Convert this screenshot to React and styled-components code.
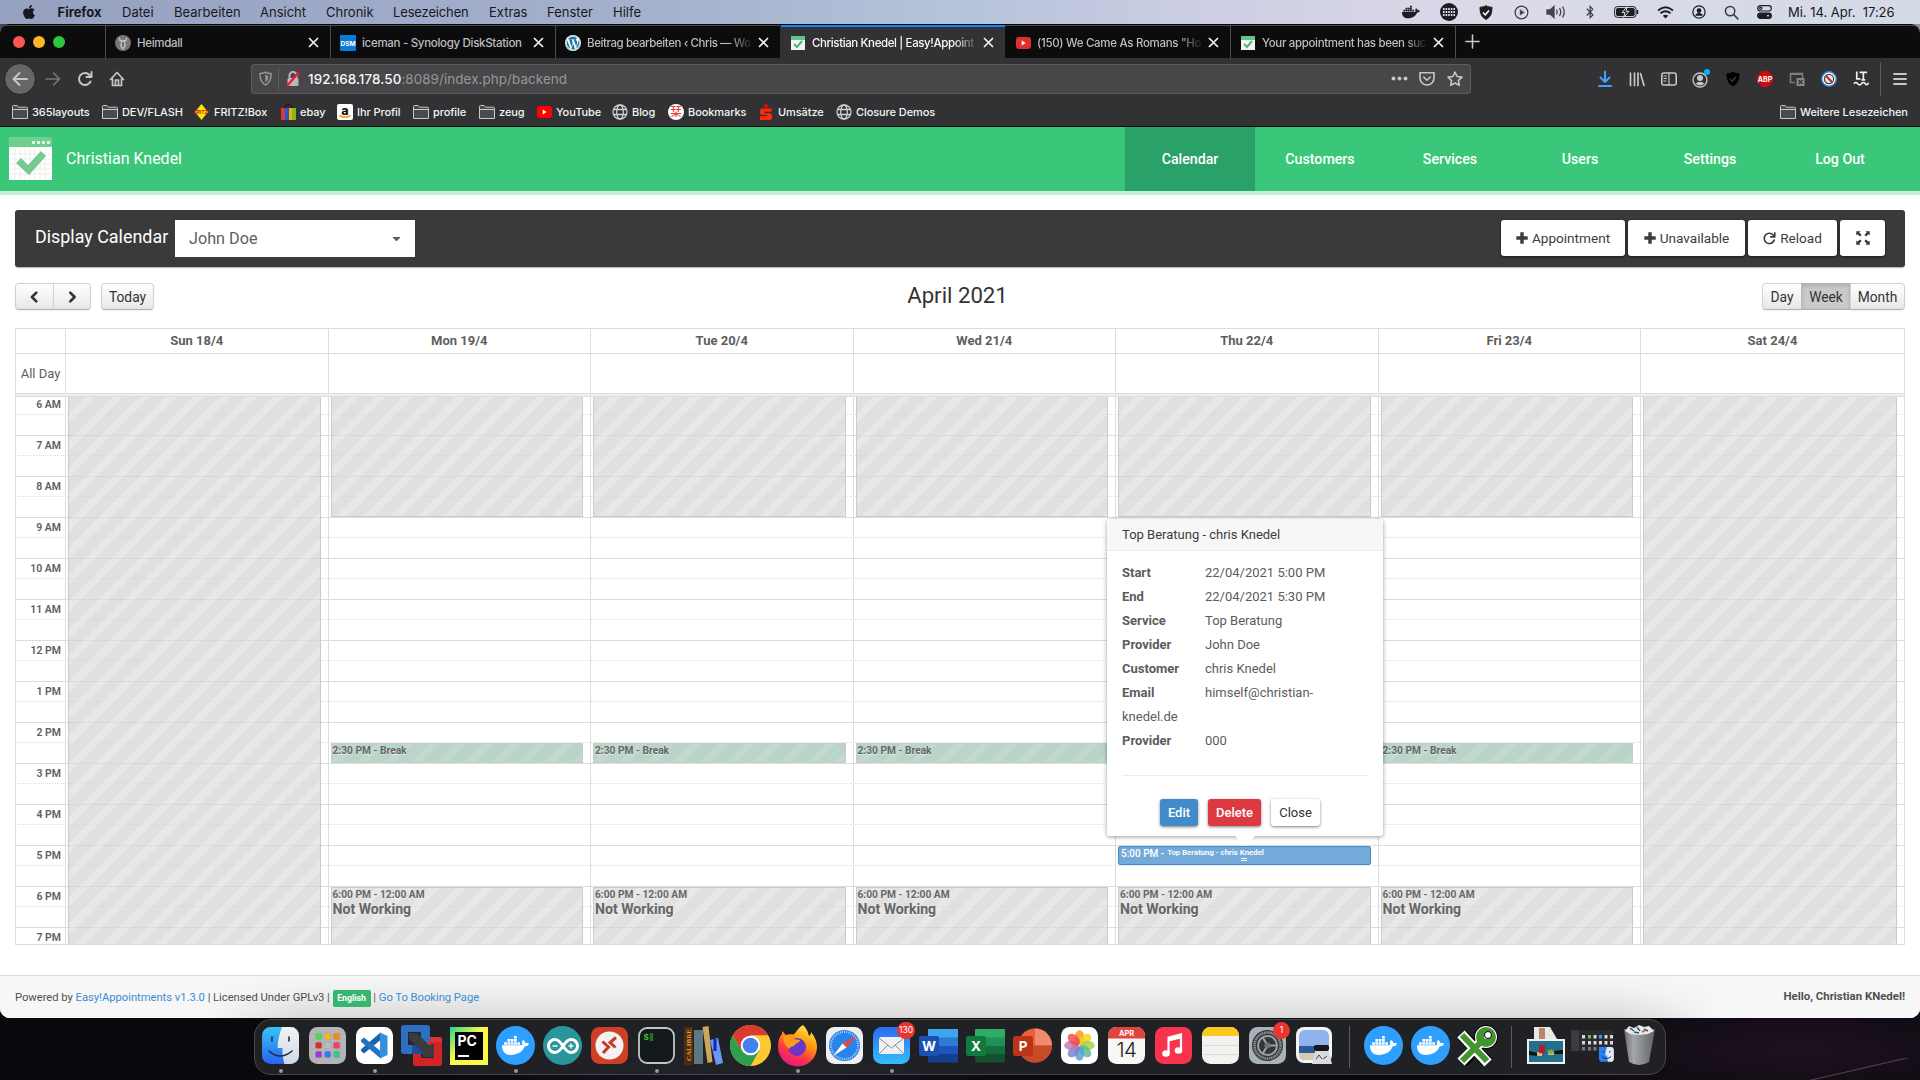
import React from "react";
import styled, { createGlobalStyle, css } from "styled-components";
import { FaApple, FaDocker, FaWordpress, FaBluetoothB, FaCaretDown } from "react-icons/fa";

const Global = createGlobalStyle`
  *, *::before, *::after { box-sizing: border-box; }
  body { margin: 0; background: #09080c; overflow: hidden; }
  svg { display: block; flex: none; overflow: visible; }
`;

const sys = `Inter, "Liberation Sans", sans-serif`;
const rob = `Roboto, "Liberation Sans", sans-serif`;

const Desktop = styled.div`
  width: 1920px;
  height: 1080px;
  display: flex;
  flex-direction: column;
  overflow: hidden;
  font-family: ${sys};
  background:
    linear-gradient(167deg, transparent 0 48%, #4b3544 49% 50.5%, transparent 52%) 1800px 1058px / 110px 24px no-repeat,
    radial-gradient(ellipse 330px 70px at 1800px 1050px, #1d111e, transparent),
    radial-gradient(ellipse 300px 50px at 750px 1085px, #191623, transparent),
    linear-gradient(90deg, #3a4a68 0 960px, #8d90a8) 0 0 / 100% 40px no-repeat,
    #09080c;
`;

/* ---------- system menu bar ---------- */
const MenuBar = styled.header`
  height: 24px;
  flex: none;
  display: flex;
  align-items: center;
  background: linear-gradient(90deg, #95a1bf 0%, #a4b0cc 33%, #b6c3da 50%, #cdcee4 63%, #dbdae8 78%, #d3dae6 100%);
  color: #17181d;
  font-size: 13px;
`;
const MenuItem = styled.span`
  width: ${(p) => p.$w}px;
  font-weight: ${(p) => (p.$bold ? 700 : 400)};
  letter-spacing: ${(p) => p.$ls || 0}px;
  white-space: nowrap;
`;
const AppleSlot = styled.span`
  width: 57.5px;
  padding-left: 21px;
`;
const Status = styled.div`
  margin-left: auto;
  display: flex;
  align-items: center;
`;
const StatusIcon = styled.span`
  width: ${(p) => p.$w}px;
  display: flex;
  justify-content: center;
  color: ${(p) => p.$c || "#1c1d22"};
`;
const Clock = styled.span`
  width: 140px;
  padding-left: 8px;
  white-space: pre;
  letter-spacing: -0.02px;
`;

/* ---------- browser window ---------- */
const Window = styled.div`
  height: 994px;
  flex: none;
  display: flex;
  flex-direction: column;
  background: #fff;
  border-top: 1px solid #08080a;
  border-radius: 9px 9px 10px 10px;
  overflow: hidden;
`;
const TabBar = styled.div`
  height: 33px;
  flex: none;
  display: flex;
  background: #0c0c0d;
  border-top: 1px solid #4a4a4c;
`;
const Lights = styled.div`
  width: 105px;
  display: flex;
  align-items: center;
  gap: 8px;
  padding-left: 13px;
`;
const Light = styled.i`
  width: 12px;
  height: 12px;
  border-radius: 50%;
  background: ${(p) => p.$c};
`;
const Tab = styled.div`
  width: 225px;
  display: flex;
  align-items: center;
  margin-top: -1px;
  padding: 2px 11px 0 9px;
  gap: 6px;
  border-left: 1px solid ${(p) => (p.$active || p.$noLine ? "transparent" : "#4d4d50")};
  background: ${(p) => (p.$active ? "#323234" : "transparent")};
  color: ${(p) => (p.$active ? "#f9f9fa" : "#bdbdc0")};
  box-shadow: ${(p) => (p.$active ? "inset 0 2px #0a84ff" : "none")};
  font-size: 11.5px;
  font-weight: ${(p) => (p.$active ? 500 : 450)};
`;
const TabIcon = styled.span`
  width: 16px;
  flex: none;
  display: flex;
  justify-content: center;
`;
const TabTitle = styled.span`
  flex: 1;
  min-width: 0;
  white-space: nowrap;
  letter-spacing: ${(p) => p.$ls || -0.3}px;
  ${(p) => p.$fade && css`mask-image: linear-gradient(90deg, #000 86%, transparent 101%);`}
`;
const NewTab = styled.div`
  border-left: 1px solid #4d4d50;
  padding: 8px 0 0 9px;
  color: #c6c6c9;
`;
const NavBar = styled.div`
  height: 41px;
  flex: none;
  display: flex;
  align-items: center;
  background: #323234;
  padding: 0 12px 0 4px;
  color: #c6c6c9;
`;
const BackButton = styled.span`
  width: 32px;
  height: 32px;
  border-radius: 50%;
  border: 1px solid #222224;
  background: #666668;
  display: flex;
  align-items: center;
  justify-content: center;
`;
const NavIcon = styled.span`
  width: ${(p) => p.$w || 32}px;
  display: flex;
  justify-content: center;
  color: ${(p) => p.$c || "inherit"};
`;
const UrlBar = styled.div`
  width: 1220px;
  height: 30px;
  margin-left: 118px;
  padding: 0 1px 0 5px;
  display: flex;
  align-items: center;
  background: #474749;
  border: 1px solid #5c5c5e;
  border-radius: 3px;
  font-size: 13.4px;
  color: #98989b;
`;
const UrlDivider = styled.i`
  width: 1px;
  height: 22px;
  margin: 0 7px 0 5px;
  background: #5f5f62;
`;
const Url = styled.span`
  flex: 1;
  margin-left: 8px;
  letter-spacing: 0.09px;
  b { font-weight: 500; color: #f9f9fa; }
`;
const NavTools = styled.div`
  margin-left: auto;
  display: flex;
  align-items: center;
`;
const MenuDivider = styled.i`
  width: 1px;
  height: 34px;
  margin: 0 11px 0 3px;
  background: #59595b;
`;
const BookmarkBar = styled.div`
  height: 28px;
  flex: none;
  display: flex;
  align-items: center;
  padding: 0 11px 2px 12px;
  background: #323234;
  border-bottom: 1px solid #0d0d0e;
  color: #f4f4f5;
  font-size: 11px;
  font-weight: 450;
`;
const Bookmark = styled.span`
  width: ${(p) => p.$w}px;
  display: flex;
  align-items: center;
  gap: 4px;
  white-space: nowrap;
  letter-spacing: -0.08px;
`;
const OtherBookmarks = styled(Bookmark)`
  margin-left: auto;
`;

/* ---------- application ---------- */
const AppHeader = styled.div`
  height: 68px;
  flex: none;
  display: flex;
  background: #3ac779;
  border-bottom: 4px solid #c3f0d6;
  padding-right: 15px;
  font-family: ${rob};
  color: #fff;
`;
const Brand = styled.div`
  display: flex;
  align-items: center;
  gap: 14px;
  padding-left: 9px;
  flex: 1;
  font-size: 16px;
  svg { margin-top: -2px; }
  span { margin-top: -1px; }
`;
const NavLink = styled.a`
  width: 130px;
  display: flex;
  align-items: center;
  justify-content: center;
  font-size: 14.2px;
  font-weight: 500;
  background: ${(p) => (p.$active ? "#29a168" : "transparent")};
`;
const Page = styled.main`
  flex: 1;
  display: flex;
  flex-direction: column;
  padding: 15px 15px 0;
  font-family: ${rob};
`;
const CalendarToolbar = styled.div`
  height: 57px;
  flex: none;
  display: flex;
  align-items: center;
  padding: 0 20px 1px;
  background: #3a3a3a;
  border-radius: 3px;
  box-shadow: 0 1px 1px rgba(0, 0, 0, 0.3);
`;
const ToolbarLabel = styled.label`
  width: 140px;
  color: #fff;
  font-size: 17.9px;
  margin-top: -4px;
`;
const Select = styled.div`
  width: 240px;
  height: 37px;
  display: flex;
  align-items: center;
  justify-content: space-between;
  padding: 0 12px 0 14px;
  background: #fff;
  color: #5e5e5e;
  font-size: 16.2px;
`;
const ToolbarActions = styled.div`
  margin-left: auto;
  display: flex;
  gap: 3px;
`;
const ActionButton = styled.button`
  width: ${(p) => p.$w}px;
  height: 36px;
  display: flex;
  align-items: center;
  justify-content: center;
  gap: 4px;
  border: 0;
  border-radius: 3px;
  padding: 0;
  background: #fff;
  color: #3c3c3c;
  font: 400 13.6px ${rob};
  box-shadow: 0 1px 3px rgba(0, 0, 0, 0.6);
`;
const CalendarHeader = styled.div`
  display: grid;
  grid-template-columns: 1fr auto 1fr;
  align-items: center;
  height: 61px;
  flex: none;
  padding-bottom: 2px;
`;
const ButtonSet = styled.div`
  display: flex;
  justify-self: ${(p) => (p.$right ? "end" : "start")};
`;
const FcButton = styled.button`
  width: ${(p) => p.$w}px;
  height: 27px;
  margin-left: ${(p) => p.$gap || -1}px;
  padding: 0;
  display: flex;
  align-items: center;
  justify-content: center;
  border: 1px solid ${(p) => (p.$active ? "#b9b9b9" : "#d2d2d2")};
  border-bottom-color: #b0b0b0;
  border-radius: ${(p) => p.$r || "0"};
  background: ${(p) => (p.$active ? "#cacaca" : "linear-gradient(#fff, #e7e7e7)")};
  box-shadow: ${(p) => (p.$active ? "inset 0 2px 4px rgba(0,0,0,.15)" : "inset 0 1px 0 rgba(255,255,255,.2), 0 1px 2px rgba(0,0,0,.06)")};
  color: #333;
  font: 400 13.8px ${rob};
`;
const MonthTitle = styled.h2`
  margin: 0;
  padding: 0 5px 4px 0;
  color: #333;
  font-size: 22.2px;
  font-weight: 400;
`;
const Grid = styled.section`
  height: 617px;
  flex: none;
  display: flex;
  flex-direction: column;
  border: 1px solid #ddd;
  color: #5e5e5e;
`;
const columns = css`
  display: grid;
  grid-template-columns: 49px repeat(6, 262.5px) 1fr;
`;
const HeadRow = styled.div`
  ${columns}
  height: ${(p) => p.$h}px;
  flex: none;
  border-bottom: 1px solid #ddd;
  font-size: 13px;
`;
const HeadCell = styled.div`
  display: flex;
  align-items: center;
  justify-content: center;
  padding: 0 0 ${(p) => (p.$plain ? 0 : 2)}px 0;
  font-weight: ${(p) => (p.$plain ? 400 : 700)};
  white-space: nowrap;
  & + & { border-left: 1px solid #ddd; }
`;
const Band = styled.div`
  height: 3px;
  flex: none;
  background: #eee;
  border-bottom: 1px solid #ddd;
`;
const TimeBody = styled.div`
  flex: 1;
  min-height: 0;
  display: grid;
  overflow: hidden;
`;
const Layer = styled.div`
  grid-area: 1 / 1;
  min-width: 0;
  height: 574px;
  margin-top: -3px;
`;
const Hour = styled.div`
  height: 41px;
  border-top: 1px solid #ddd;
`;
const HourLabel = styled.div`
  width: 49px;
  height: 19px;
  padding: 4px 4px 0 0;
  text-align: right;
  font-size: 10.5px;
  line-height: 12px;
  font-weight: 600;
`;
const HalfHour = styled.div`
  height: 21px;
  margin: 0 2px;
  border-top: 1px dotted #ddd;
`;
const DayLayer = styled(Layer)`
  ${columns}
  z-index: 1;
`;
const Day = styled.div`
  display: grid;
  grid-template-rows: 3px 17px 21px repeat(13, 20px 21px);
  border-left: 1px solid #ddd;
  padding: 0 7px 0 2px;
  min-width: 0;
`;
const stripes = {
  off: ["rgba(211,211,211,.7)", "rgba(222,222,222,.7)"],
  pause: ["rgba(154,195,175,.7)", "rgba(166,202,184,.7)"],
};
const Slot = styled.div`
  grid-row: ${(p) => p.$from} / ${(p) => p.$to};
  margin-top: ${(p) => (p.$from < 3 ? 0 : 1)}px;
  padding: 1px 2px 1px 1px;
  border: 1px solid #cbcbcb;
  border-top-width: ${(p) => (p.$from < 3 ? 0 : 1)}px;
  background: repeating-linear-gradient(135deg,
    ${(p) => stripes[p.$kind][0]} 0 11.5px,
    ${(p) => stripes[p.$kind][1]} 11.5px 19px);
  background-clip: padding-box;
  color: #666;
  font-size: 10.2px;
  line-height: 12px;
  font-weight: 700;
  white-space: nowrap;
  text-shadow: 0 1px 0 rgba(255, 255, 255, 0.5);
`;
const SlotTitle = styled.div`
  font-size: 14.1px;
  line-height: 17px;
`;
const Appointment = styled.div`
  grid-row: ${(p) => p.$from} / ${(p) => p.$to};
  margin-top: 1px;
  padding: 1px 1px 1px 2px;
  display: flex;
  gap: 3px;
  position: relative;
  background: #74aad9;
  border: 1px solid #428bca;
  border-radius: 2px;
  color: #fff;
  font-size: 10px;
  line-height: 12px;
  font-weight: 500;
  white-space: nowrap;
  small { font-size: 7.8px; line-height: 9px; font-weight: 600; }
`;
const ResizeGrip = styled.i`
  position: absolute;
  left: 50%;
  bottom: 3px;
  width: 6px;
  height: 3px;
  margin-left: -3px;
  border: solid #fff;
  border-width: 1px 0;
`;

/* ---------- popover ---------- */
const Popover = styled.div`
  position: absolute;
  left: 1107px;
  top: 519px;
  width: 276px;
  height: 317px;
  z-index: 5;
  background: #fff;
  border-radius: 3px;
  box-shadow: 0 1px 4px rgba(0, 0, 0, 0.4);
  font-family: ${rob};
  font-size: 13px;
  color: #5c5c5c;
  &::after {
    content: "";
    position: absolute;
    left: 128px;
    top: 317px;
    border: solid transparent;
    border-top-color: #fff;
    border-width: 10px 10px 0;
  }
`;
const PopoverTitle = styled.div`
  height: 32px;
  padding: 8px 15px 0;
  line-height: 16px;
  background: #f7f7f7;
  border-bottom: 1px solid #ebebeb;
  border-radius: 3px 3px 0 0;
  color: #3c3c3c;
`;
const PopoverRows = styled.div`
  padding: 10px 15px 0;
  line-height: 24px;
  div { height: 24px; }
  b { display: inline-block; width: 83px; }
`;
const PopoverFooter = styled.div`
  display: flex;
  justify-content: center;
  gap: 10px;
  margin: 22px 15px 0;
  padding: 23px 10px 0 0;
  border-top: 1px solid #ececec;
`;
const PopoverButton = styled.button`
  width: ${(p) => p.$w}px;
  height: 27px;
  padding: 0;
  border: 0;
  border-radius: 3px;
  background: ${(p) => p.$bg};
  color: ${(p) => p.$c || "#fff"};
  font: ${(p) => (p.$c ? 400 : 500)} 13px ${rob};
  box-shadow: 0 1px 3px rgba(0, 0, 0, 0.5);
`;

/* ---------- footer ---------- */
const Footer = styled.footer`
  height: 43px;
  flex: none;
  display: flex;
  align-items: center;
  justify-content: space-between;
  padding: 0 15px;
  border-top: 1px solid #ddd;
  background:
    linear-gradient(90deg, #f7f7f7 205px, transparent 300px 1620px, #f7f7f7 1720px),
    linear-gradient(#f7f7f7, #eeeeee 45%, #dadada);
  font-family: ${rob};
  font-size: 11.25px;
  color: #505050;
  white-space: nowrap;
  a { color: #3c8dd0; }
  & > span { letter-spacing: -0.04px; padding-top: 2px; }
  & > b { padding-bottom: 2px; font-size: 11.4px; }
`;
const Language = styled.span`
  display: inline-block;
  width: 38px;
  height: 17px;
  border-radius: 2px;
  background: #35b66f;
  color: #fff;
  font-size: 8.8px;
  font-weight: 700;
  line-height: 17px;
  text-align: center;
`;

/* ---------- dock ---------- */
const DockArea = styled.div`
  height: 62px;
  flex: none;
  display: flex;
  justify-content: center;
  padding-top: 1px;
`;
const Dock = styled.div`
  width: 1412px;
  height: 56px;
  display: flex;
  padding-left: 2px;
  background: rgba(34, 35, 39, 0.93);
  border: 1px solid #46464b;
  border-radius: 17px;
`;
const DockCell = styled.div`
  width: 47px;
  flex: none;
  display: flex;
  flex-direction: column;
  align-items: center;
  justify-content: center;
  position: relative;
  padding-bottom: 3px;
  &::after {
    content: "";
    display: ${(p) => (p.$running ? "block" : "none")};
    position: absolute;
    bottom: 1px;
    width: 4px;
    height: 4px;
    border-radius: 50%;
    background: #97979a;
  }
`;
const DockDivider = styled.div`
  width: ${(p) => p.$w}px;
  display: flex;
  justify-content: center;
  padding: 6px 0;
  &::before { content: ""; width: 1px; background: #5b5b5f; }
`;
const CountBadge = styled.span`
  position: absolute;
  right: ${(p) => p.$right}px;
  top: 2px;
  min-width: 17px;
  height: 17px;
  padding: 0 2px;
  border-radius: 9px;
  background: #e9352e;
  color: #fff;
  font-size: 8.5px;
  line-height: 17px;
  text-align: center;
`;

/* ---------- icons ---------- */
const Folder = () => (
  <svg width="16" height="14" viewBox="0 0 16 14" fill="#4a4a4c" stroke="#c9c9cb" strokeWidth="1">
    <path d="M.5 13.5V1.5Q.5.5 1.5.5H5L6.500 2.200H14.500Q15.500 2.200 15.500 3.200V13.500ZM.5 4.500H15.500" />
  </svg>
);
const Globe = () => (
  <svg width="16" height="16" viewBox="0 0 16 16" fill="none" stroke="#cfcfd1" strokeWidth="1.300">
    <circle cx="8" cy="8" r="7" /><ellipse cx="8" cy="8" rx="3.300" ry="7" /><path d="M1.500 5.500h13M1.500 10.500h13" />
  </svg>
);
const Cross = () => (
  <svg width="11" height="11" viewBox="0 0 11 11" stroke="#f2f2f3" strokeWidth="1.700"><path d="M1 1l9 9M10 1l-9 9" /></svg>
);
const Plus = () => (
  <svg width="12" height="12" viewBox="0 0 12 12" fill="#3c3c3c"><path d="M4.300.3h3.400v4h4v3.400h-4v4H4.300v-4h-4V4.300h4z" /></svg>
);
const AppLogo = ({ w = 43, h = 43 }) => (
  <svg width={w} height={h} viewBox="0 0 43 43">
    <rect width="43" height="43" fill="#fff" />
    <path d="M6 12v30M11 12v30M16 12v30M21 12v30M26 12v30M31 12v30M36 12v30M1 17h41M1 22h41M1 27h41M1 32h41M1 37h41" stroke="#ececec" />
    <rect width="43" height="10" fill="#6fd08d" />
    <path d="M23 5.500h3M28 5.500h3M33 5.500h3M38 5.500h3" stroke="#dff7e6" strokeWidth="3" />
    <path d="M7 26l5-5 7 7L32 14l5 5-17 19z" fill="#74ca8f" />
  </svg>
);
const TabLogo = () => (
  <svg width="14" height="14" viewBox="0 0 14 14">
    <rect width="14" height="14" fill="#f3f3f3" /><rect width="14" height="4" fill="#5fc785" />
    <path d="M3 8l3 3 5-6" stroke="#4cb873" strokeWidth="2" fill="none" />
  </svg>
);
const Youtube = ({ c = "#f00" }) => (
  <svg width="15" height="12" viewBox="0 0 15 12"><rect width="15" height="12" rx="3" fill={c} /><path d="M5.700 3.600v4.800l4-2.400z" fill="#fff" /></svg>
);
const Stroke = ({ d, s = 16, w = 1.8, children, vb = 16 }) => (
  <svg width={s} height={s} viewBox={`0 0 ${vb} ${vb}`} fill="none" stroke="currentColor" strokeWidth={w} strokeLinecap="round" strokeLinejoin="round">
    {d && <path d={d} />}{children}
  </svg>
);

const Squircle = ({ fill, children, s = 37 }) => (
  <svg width={s} height={s} viewBox="0 0 37 37"><rect width="37" height="37" rx="8.500" fill={fill} />{children}</svg>
);
const Finder = ({ s = 37 }) => (
  <svg width={s} height={s} viewBox="0 0 37 37">
    <defs>
      <linearGradient id="fa" x2="0" y2="1"><stop stopColor="#35c4f8" /><stop offset="1" stopColor="#2b62f0" /></linearGradient>
      <linearGradient id="fb" x2="0" y2="1"><stop stopColor="#f2f3f6" /><stop offset="1" stopColor="#cfd8e6" /></linearGradient>
      <clipPath id="fc"><rect width="37" height="37" rx="8.500" /></clipPath>
    </defs>
    <g clipPath="url(#fc)">
      <rect width="37" height="37" fill="url(#fa)" />
      <path d="M20 0Q16 10 15.500 21H20.500Q20 30 22.500 37H37V0Z" fill="url(#fb)" />
      <path d="M10 10v4M27 10v4M7 24Q18 34 30 24" stroke="#1d2b45" strokeWidth="1.600" fill="none" strokeLinecap="round" />
    </g>
  </svg>
);
const Launchpad = () => {
  const c = ["#4cdc46", "#fdb81e", "#f68a12", "#e02a2a", "#b9bcc0", "#fb3d5c", "#a436d8", "#2f7bf6", "#3ec58b"];
  return <Squircle fill="#b3b4b7">{c.map((f, i) => <rect key={i} x={6.500 + (i % 3) * 9} y={6.300 + Math.floor(i / 3) * 9} width="6.300" height="6.300" rx="1.500" fill={f} stroke="#8a8b8e" strokeWidth=".3" />)}</Squircle>;
};
const VsCode = () => (
  <Squircle fill="#fff">
    <path d="M24.500 5.500V13L8 26.500 5 24V22.300z" fill="#1b62ae" />
    <path d="M24.500 31.500V24L8 10.500 5 13v1.700z" fill="#2273c4" />
    <path d="M24 5.500L31.500 9v19L24 31.500z" fill="#3590dc" />
  </Squircle>
);
const VmWare = () => (
  <svg width="41" height="41" viewBox="0 0 41 41">
    <rect x="12" y="12" width="29" height="29" rx="3" fill="#d22427" /><rect x="20" y="20" width="13" height="13" fill="#26262a" />
    <rect width="29" height="29" rx="3" fill="#2d6fc0" /><path d="M11 20h18v9H11z" fill="#1f4d96" /><rect x="7" y="7" width="13" height="13" fill="#26262a" />
    <path d="M20 20h9v-8h9q3 0 3 3v2H20z" fill="#d83436" />
    <path d="M8 8h8l12 12 5-1v13H20l3-4L8 14z" fill="#3a3a3f" />
  </svg>
);
const PyCharm = () => (
  <svg width="38" height="38" viewBox="0 0 38 38">
    <defs><linearGradient id="pc" x2="1" y2="1"><stop stopColor="#21d789" /><stop offset=".45" stopColor="#fcf84a" /><stop offset="1" stopColor="#fcf84a" /></linearGradient></defs>
    <rect width="38" height="38" fill="url(#pc)" /><rect x="5" y="5" width="28" height="28" fill="#000" />
    <text x="7.500" y="18.500" fontFamily="Inter, sans-serif" fontWeight="700" fontSize="14" fill="#fff">PC</text><path d="M8 29h11" stroke="#fff" strokeWidth="2" />
  </svg>
);
const RoundIcon = styled.span`
  width: 39px;
  height: 39px;
  border-radius: 50%;
  display: flex;
  align-items: center;
  justify-content: center;
  background: ${(p) => p.$bg};
  color: #fff;
`;
const Docker = () => <RoundIcon $bg="#2f9fff"><FaDocker size={27} /></RoundIcon>;
const Arduino = () => (
  <RoundIcon $bg="#2a959b">
    <svg width="32" height="20" viewBox="0 0 32 20" fill="none" stroke="#fff" strokeWidth="3">
      <path d="M16 10C13 5.500 11 3.500 8 3.500a6.500 6.500 0 0 0 0 13c3 0 5-2 8-6.500s5-6.500 8-6.500a6.500 6.500 0 0 1 0 13c-3 0-5-2-8-6.500z" />
      <path d="M5.500 10h5M21.500 10h5M24 7.500v5" strokeWidth="1.500" />
    </svg>
  </RoundIcon>
);
const Remote = () => (
  <Squircle fill="#cf3f24"><circle cx="18.500" cy="18.500" r="14" fill="#f3f1f1" />
    <path d="M11.500 14.500l6 5.500-5.500 6M25 10.500l-6 5 5.500 5" stroke="#c73a20" strokeWidth="3" fill="none" /></Squircle>
);
const Terminal = () => (
  <svg width="37" height="37" viewBox="0 0 37 37"><rect x="1" y="1" width="35" height="35" rx="8" fill="#141a1c" stroke="#bfc6ca" strokeWidth="1.800" />
    <text x="5.500" y="13" fontFamily="Liberation Mono, monospace" fontWeight="700" fontSize="9" fill="#35c13b">$</text><path d="M13.500 6v8" stroke="#216f25" strokeWidth="3.500" /></svg>
);
const Calibre = () => (
  <svg width="41" height="39" viewBox="0 0 41 39">
    <rect x="1" y="1" width="9" height="38" fill="#4e2a12" /><rect x="11" y="4" width="9" height="34" fill="#5c7882" />
    <path d="M19.500 1l6-1 4 36-5 1z" fill="#c9a75c" /><path d="M27 14l8-2 5 25-7 2z" fill="#6a98f5" /><path d="M32 13v12" stroke="#1b22b0" strokeWidth="3" />
    <text transform="translate(8.200 35) rotate(-90)" fontSize="7" fontFamily="Liberation Serif, serif" fontWeight="700" fill="#e0a23a">CALIBRE</text>
  </svg>
);
const Chrome = () => (
  <svg width="41" height="41" viewBox="0 0 41 41">
    <circle cx="20.500" cy="20.500" r="20.500" fill="#fcc934" />
    <path d="M2.750 10.250A20.500 20.500 0 0 1 38.250 10.250H20.500L11.600 25.500Z" fill="#d93b30" />
    <path d="M2.750 10.250A20.500 20.500 0 0 0 20.500 41L29.400 25.600 11.600 25.600Z" fill="#2f9e4f" />
    <circle cx="20.500" cy="20.500" r="9.800" fill="#fff" /><circle cx="20.500" cy="20.500" r="7.800" fill="#4480ee" />
  </svg>
);
const Firefox = () => (
  <svg width="41" height="41" viewBox="0 0 41 41">
    <defs><linearGradient id="ff" x1=".8" y1="0" x2=".3" y2="1"><stop stopColor="#fff244" /><stop offset=".4" stopColor="#ff980e" /><stop offset=".7" stopColor="#ff3647" /><stop offset="1" stopColor="#e31587" /></linearGradient></defs>
    <path d="M26 0c5 5 5 8 6 11 2-1 2-3 2-4 4 5 6 10 6 15A19.500 19.500 0 0 1 1 22C1 15 3 11 5 9V6l4 4c2-1 4-1 6-.500C19 10 20 3 26 0Z" fill="url(#ff)" />
    <circle cx="20" cy="22" r="9" fill="#6a35c8" /><path d="M6 11c5-1 8 1 10 3l7 1c0 3-5 3-6 6-2 0-4 1-5 3-4-4-6-8-6-13z" fill="#ff9a1a" />
  </svg>
);
const Safari = () => (
  <Squircle fill="#eeeff1"><circle cx="18.500" cy="18.500" r="15.500" fill="#2a83ea" /><circle cx="18.500" cy="18.500" r="13.500" fill="none" stroke="#cfe4fb" strokeWidth="2" strokeDasharray=".8 1.300" />
    <path d="M31 8L20.500 20.500 16.500 16.500Z" fill="#f04438" /><path d="M7 29l9.500-12.500 4 4z" fill="#fff" /></Squircle>
);
const Mail = () => (
  <svg width="37" height="37" viewBox="0 0 37 37"><defs><linearGradient id="ml" x2="0" y2="1"><stop stopColor="#2b6cf2" /><stop offset="1" stopColor="#35bdf9" /></linearGradient></defs>
    <rect width="37" height="37" rx="8.500" fill="url(#ml)" /><rect x="6" y="10" width="25" height="17" rx="1.500" fill="#eef0f2" /><path d="M6 11l12.500 10L31 11M6 27l9-9M31 27l-9-9" fill="none" stroke="#8c9198" /></svg>
);
const Office = ({ letter, main, a, b, c, d, round }) => (
  <svg width="39" height="35" viewBox="0 0 39 35">
    {round ? (
      <g><circle cx="22" cy="17.500" r="17" fill={b} /><path d="M22 .5A17 17 0 0 1 39 17.500H22z" fill={a} /><path d="M5 17.500H39A17 17 0 0 1 22 34.500 17 17 0 0 1 5 17.500" fill={c} /></g>
    ) : (
      <g><rect x="9" y="1" width="30" height="9" fill={a} /><rect x="9" y="9.500" width="30" height="9" fill={b} /><rect x="9" y="18" width="30" height="8.500" fill={c} /><rect x="9" y="26" width="30" height="8.500" fill={d} /></g>
    )}
    <rect x="0" y="8" width="20" height="20" rx="2" fill={main} />
    <text x="10" y="23" textAnchor="middle" fontFamily="Inter, sans-serif" fontWeight="700" fontSize="13.500" fill="#fff">{letter}</text>
  </svg>
);
const Photos = () => {
  const c = ["#f7941d", "#f5d90f", "#a5cf4a", "#5cbb8a", "#4f9fd9", "#7c7fc9", "#c076b5", "#ea4a45"];
  return <Squircle fill="#fff">{c.map((f, i) => <ellipse key={i} cx="18.500" cy="10.500" rx="4.700" ry="7.300" fill={f} opacity=".82" transform={`rotate(${i * 45} 18.500 18.500)`} />)}</Squircle>;
};
const CalendarIcon = () => (
  <Squircle fill="#f7f7f5"><path d="M0 11V8.500A8.500 8.500 0 0 1 8.500 0H28.500A8.500 8.500 0 0 1 37 8.500V11.500H0z" fill="#e0443c" />
    <text x="18.500" y="8.700" textAnchor="middle" fontSize="7.300" fontWeight="700" fontFamily="Inter, sans-serif" fill="#fff">APR</text>
    <text x="18.500" y="30" textAnchor="middle" fontSize="20.500" fontWeight="300" letterSpacing="-.5" fontFamily="Inter, sans-serif" fill="#222">14</text></Squircle>
);
const Music = () => (
  <Squircle fill="#f8334d"><path d="M13.500 26V10.500L26 7.500V23" fill="none" stroke="#fff" strokeWidth="2.200" /><path d="M13.500 10.500L26 7.500v4L13.500 14.500z" fill="#fff" /><ellipse cx="11" cy="26.500" rx="3.800" ry="3.200" fill="#fff" /><ellipse cx="23.500" cy="23.500" rx="3.800" ry="3.200" fill="#fff" /></Squircle>
);
const Notes = () => (
  <Squircle fill="#f3f2f0"><path d="M0 9V8.500A8.500 8.500 0 0 1 8.500 0H28.500A8.500 8.500 0 0 1 37 8.500V9z" fill="#fbc81f" /><path d="M1 18.500h35M1 27.500h35" stroke="#dcdad6" /></Squircle>
);
const Settings = () => (
  <Squircle fill="#a9b2b8"><circle cx="18.500" cy="18.500" r="15.500" fill="#33373b" /><circle cx="18.500" cy="18.500" r="13" fill="none" stroke="#8f9498" strokeWidth="2.500" strokeDasharray="1.500 .7" />
    <circle cx="18.500" cy="18.500" r="9.500" fill="none" stroke="#9da1a5" strokeWidth="2" /><path d="M18.500 18.500H28M18.500 18.500L13.500 10M18.500 18.500L13.500 27" stroke="#9da1a5" strokeWidth="2" /><circle cx="18.500" cy="18.500" r="3" fill="#6d7277" /></Squircle>
);
const PreviewIcon = () => (
  <svg width="38" height="38" viewBox="0 0 38 38"><rect width="36" height="36" rx="8" fill="#f4f4f4" /><rect x="3" y="3" width="30" height="30" rx="6" fill="#8fb3ef" /><path d="M3 19h30v8H3z" fill="#285d95" /><path d="M3 26h30v2a5 5 0 0 1-5 5H8a5 5 0 0 1-5-5z" fill="#d8c9b4" />
    <path d="M19 20h14v5l3 12H16l3-12z" fill="#d9dbde" /><rect x="18" y="18" width="15" height="6" rx="2" fill="#17181a" /><path d="M20 32l3-4 3 4M27 32l4-3" stroke="#444" fill="none" /></svg>
);
const KeePass = () => (
  <svg width="41" height="41" viewBox="0 0 41 41">
    <g fill="none" stroke="#000" strokeWidth="14"><path d="M5 10l25 27M6 37L27 14" strokeWidth="12" /><circle cx="29" cy="12" r="5" /></g>
    <g fill="none" stroke="#fff" strokeWidth="10"><path d="M4 9l27 29M4 37L27 14" /><circle cx="29" cy="12" r="6" /></g>
    <g fill="none" stroke="#43962f" strokeWidth="6"><path d="M5 10l25 26M5 36L27 14" /><circle cx="29" cy="12" r="6" strokeWidth="8" /></g>
    <circle cx="31" cy="10" r="3.500" fill="#fff" stroke="#000" />
  </svg>
);
const PictureStack = () => (
  <svg width="38" height="37" viewBox="0 0 38 37"><path d="M7 0h16l7 12H7z" fill="#e9e9e9" /><path d="M12 1h6v11h-6z" fill="#b98667" /><rect y="12" width="38" height="25" fill="#eef2f3" /><rect x="2" y="14" width="34" height="21" fill="#23708d" />
    <path d="M2 24l9 2v3l-9-1zM36 23l-9 1v3l9 0z" fill="#111" /><path d="M10 25h5v4h-5zM21 25h6v3h-6z" fill="#e5b08b" /><rect x="12" y="18" width="6" height="8" fill="#b41f27" /><path d="M20 24l5-2 3 4-6 1z" fill="#6bb742" /></svg>
);
const MiniWindow = () => (
  <svg width="43" height="34" viewBox="0 0 43 34">
    <rect width="42" height="21" y="1" fill="#2b2b2d" /><rect width="8" height="21" y="1" fill="#3c3b3d" />
    {[6, 12, 18].map((y) => [11, 17, 22.500, 28, 33.500, 39].map((x, i) => <rect key={x + "-" + y} x={x} y={y} width="3" height="3.500" fill={y === 6 && i === 3 ? "#2f9fff" : y === 6 && i === 1 ? "#6fbf60" : y === 18 ? "#77797d" : "#d6d8da"} />))}
    <g transform="translate(28 18) scale(.4)"><rect width="37" height="37" rx="8.500" fill="#2b80f5" /><path d="M20 0Q16 10 15.500 21H20.500Q20 30 22.500 37H28.500A8.500 8.500 0 0 0 37 28.500V8.500A8.500 8.500 0 0 0 28.500 0Z" fill="#e6ebf2" /><path d="M10 10v4M27 10v4M7 24Q18 34 30 24" stroke="#1d2b45" strokeWidth="2.500" fill="none" /></g>
  </svg>
);
const Trash = () => (
  <svg width="33" height="41" viewBox="0 0 33 41"><defs><linearGradient id="tr"><stop stopColor="#6a6e71" /><stop offset=".3" stopColor="#a3a7a9" /><stop offset="1" stopColor="#606467" /></linearGradient></defs>
    <path d="M1 4l5 33q10 6 20 0L32 4z" fill="url(#tr)" /><path d="M2 6L6 1l5 2 5-3 5 2 5-1 5 5-6 3-9 1-9-1z" fill="#e8e9ea" /><path d="M7 3l4 3M14 2l3 4M21 4l4 2M11 7l5 1" stroke="#2d5b6a" strokeWidth="1.500" /><path d="M19 7l4-2" stroke="#d2553a" strokeWidth="1.500" /></svg>
);

const shieldPath = "M8 1.200c2 1.200 4 1.500 6 1.500 0 6-1.500 10-6 12.200-4.500-2.200-6-6.200-6-12.200 2 0 4-.3 6-1.500z";

const tabs = [
  { t: "Heimdall", icon: <svg width="16" height="16" viewBox="0 0 16 16"><circle cx="8" cy="8" r="8" fill="#77777a" /><path d="M4 2q-1 4 2 5l-1 4 3 4 3-4-1-4q3-1 2-5l-2 3H6z" fill="#bdbdc0" /><path d="M7 7h2v5H7z" fill="#6d6d70" /></svg> },
  { t: "iceman - Synology DiskStation", icon: <svg width="16" height="16" viewBox="0 0 16 16"><rect width="16" height="16" rx="1" fill="#0a7bd8" /><text x="8" y="10.500" textAnchor="middle" fontSize="6.500" fontWeight="700" fontFamily="Inter, sans-serif" fill="#fff">DSM</text></svg> },
  { t: "Beitrag bearbeiten ‹ Chris — Wo", ls: -0.42, fade: true, icon: <svg width="16" height="16" viewBox="0 0 16 16"><circle cx="8" cy="8" r="8" fill="#fff" /><g transform="translate(.5 .5)"><FaWordpress size={15} color="#21759b" /></g></svg> },
  { t: "Christian Knedel | Easy!Appoint", ls: -0.38, fade: true, active: true, icon: <TabLogo /> },
  { t: "(150) We Came As Romans \"Ho", fade: true, noLine: true, icon: <Youtube c="#e02f2f" /> },
  { t: "Your appointment has been suc", ls: -0.33, fade: true, icon: <TabLogo /> },
];
const menus = [["Datei", 52], ["Bearbeiten", 86], ["Ansicht", 66], ["Chronik", 67], ["Lesezeichen", 96, -0.15], ["Extras", 58], ["Fenster", 66], ["Hilfe", 40]];
const bookmarks = [
  ["365layouts", 90, <Folder />], ["DEV/FLASH", 91, <Folder />],
  ["FRITZ!Box", 88, <svg width="17" height="16" viewBox="0 0 17 16"><path d="M8.500 0L15 8l-6.500 8L2 8z" fill="#ffe500" /><text x="8.500" y="10" fontSize="5" fontStyle="italic" fontWeight="700" textAnchor="middle" fontFamily="Inter, sans-serif" fill="#d3122a">FRITZ!</text></svg>],
  ["ebay", 56, <svg width="15" height="16" viewBox="0 0 15 16"><path d="M4 5V2.500Q7.500-1.500 11 2.500V5" fill="none" stroke="#111" /><path d="M0 4h4v12H0z" fill="#e53238" /><path d="M4 4h4v12H4z" fill="#1c5bd6" /><path d="M8 4h3v12H8z" fill="#f5af02" /><path d="M11 4h4v12h-4z" fill="#86b817" /></svg>],
  ["Ihr Profil", 76, <svg width="16" height="16" viewBox="0 0 16 16"><rect width="16" height="16" rx="2" fill="#fff" /><text x="8" y="10.800" fontSize="12.500" fontWeight="800" textAnchor="middle" fontFamily="Inter, sans-serif" fill="#111">a</text><path d="M2.500 11.500q5.500 3.500 11 0" stroke="#ff9900" strokeWidth="1.500" fill="none" /></svg>],
  ["profile", 66, <Folder />], ["zeug", 58, <Folder />], ["YouTube", 75, <Youtube />], ["Blog", 56, <Globe />],
  ["Bookmarks", 90, <svg width="16" height="16" viewBox="0 0 16 16"><circle cx="8" cy="8" r="8" fill="#fff" /><text x="8" y="12" fontSize="11" textAnchor="middle" fontFamily="Noto Sans CJK JP, sans-serif" fill="#e8372c">栞</text></svg>],
  ["Umsätze", 78, <svg width="16" height="16" viewBox="0 0 16 16"><circle cx="8" cy="2" r="1.900" fill="#f00" /><path d="M13.500 4.500H4.500Q2 4.500 2 7v1.500Q2 11 4.500 11H9v1.200H2V16H11.500Q14 16 14 13.500V12Q14 9.300 11.500 9.300H6.500V7.800h7z" fill="#ff2a0c" /></svg>],
  ["Closure Demos", 110, <Globe />],
];
const navItems = ["Calendar", "Customers", "Services", "Users", "Settings", "Log Out"];
const days = ["Sun 18/4", "Mon 19/4", "Tue 20/4", "Wed 21/4", "Thu 22/4", "Fri 23/4", "Sat 24/4"];
const hours = ["6 AM", "7 AM", "8 AM", "9 AM", "10 AM", "11 AM", "12 PM", "1 PM", "2 PM", "3 PM", "4 PM", "5 PM", "6 PM", "7 PM"];
const details = [["Start", "22/04/2021 5:00 PM"], ["End", "22/04/2021 5:30 PM"], ["Service", "Top Beratung"], ["Provider", "John Doe"], ["Customer", "chris Knedel"], ["Email", "himself@christian-"], [null, "knedel.de"], ["Provider", "000"]];

function DaySlots({ index }) {
  if (index === 0 || index === 6) return <Day><Slot $kind="off" $from={2} $to={30} /></Day>;
  return (
    <Day>
      <Slot $kind="off" $from={2} $to={8} />
      {index === 4
        ? <Appointment $from={24} $to={25}><span>5:00 PM - </span><small>Top Beratung - chris Knedel</small><ResizeGrip /></Appointment>
        : <Slot $kind="pause" $from={19} $to={20}>2:30 PM - Break</Slot>}
      <Slot $kind="off" $from={26} $to={30}>6:00 PM - 12:00 AM<SlotTitle>Not Working</SlotTitle></Slot>
    </Day>
  );
}

export default function App() {
  return (
    <Desktop>
      <Global />
      <MenuBar>
        <AppleSlot><FaApple size={16} /></AppleSlot>
        <MenuItem $w={64.5} $bold>Firefox</MenuItem>
        {menus.map(([m, w, ls]) => <MenuItem key={m} $w={w} $ls={ls}>{m}</MenuItem>)}
        <Status>
          <StatusIcon $w={38}><FaDocker size={18} /></StatusIcon>
          <StatusIcon $w={38}><svg width="18" height="18" viewBox="0 0 18 18"><circle cx="9" cy="9" r="9" fill="#1c1d22" /><path d="M3 6h12M3 9h12M3 12h12" stroke="#dcdce6" strokeWidth="1.800" strokeDasharray="1.600 1" /></svg></StatusIcon>
          <StatusIcon $w={36}><svg width="16" height="17" viewBox="0 0 16 16"><path d={shieldPath} fill="#1c1d22" stroke="#1c1d22" /><path d="M5 8l2.300 2.300L11 6" fill="none" stroke="#fff" strokeWidth="1.500" /></svg></StatusIcon>
          <StatusIcon $w={34} $c="#3a3b42"><Stroke s={15} w={1.3}><circle cx="8" cy="8" r="6.800" /><path d="M6.500 5.200v5.600l4.300-2.800z" fill="currentColor" strokeWidth=".5" /></Stroke></StatusIcon>
          <StatusIcon $w={35} $c="#44454c"><svg width="20" height="14" viewBox="0 0 20 14" fill="none" stroke="currentColor" strokeWidth="1.300"><path d="M1 5h3l4-3.500v11L4 9H1z" fill="currentColor" /><path d="M10.500 4.500q1.500 2.500 0 5M13.500 3q2.500 4 0 8M16.500 1.500q3.500 5.500 0 11" /></svg></StatusIcon>
          <StatusIcon $w={33} $c="#3a3b42"><FaBluetoothB size={14} /></StatusIcon>
          <StatusIcon $w={40}><svg width="25" height="12" viewBox="0 0 25 12"><rect x=".6" y=".6" width="21.500" height="10.800" rx="3" fill="none" stroke="#1c1d22" /><rect x="2" y="2" width="18.700" height="8" rx="1.800" fill="#1c1d22" /><path d="M23.500 4v4" stroke="#1c1d22" strokeWidth="1.500" /><path d="M13 .5L8 6.600h3L9.700 11.500 15 5.300h-3z" fill="#1c1d22" stroke="#dcdce6" /></svg></StatusIcon>
          <StatusIcon $w={38}><svg width="17" height="13" viewBox="0 0 17 13" fill="none" stroke="#1c1d22" strokeWidth="1.800"><path d="M1 4.500q7.500-6.500 15 0M3.500 7.300q5-4 10 0" /><path d="M5.800 9.700q2.700-2 5.400 0L8.500 12.500z" fill="#1c1d22" stroke="none" /></svg></StatusIcon>
          <StatusIcon $w={30}><Stroke s={14} w={1.4}><circle cx="8" cy="8" r="7" /><circle cx="8" cy="6.300" r="2" fill="currentColor" /><path d="M4.500 11.500q3.500-3 7 0z" fill="currentColor" /></Stroke></StatusIcon>
          <StatusIcon $w={35} $c="#3a3b42"><Stroke s={15} w={1.6}><circle cx="6.500" cy="6.500" r="5" /><path d="M10.500 10.500l4.300 4.300" /></Stroke></StatusIcon>
          <StatusIcon $w={31}><svg width="15" height="14" viewBox="0 0 15 14" fill="none" stroke="#1c1d22" strokeWidth="1.200"><rect x=".7" y=".7" width="13.600" height="5.300" rx="2.600" /><circle cx="3.800" cy="3.300" r="1.200" /><rect x=".7" y="8" width="13.600" height="5.300" rx="2.600" fill="#1c1d22" /><circle cx="11" cy="10.700" r="1.500" fill="#dcdce6" /></svg></StatusIcon>
          <Clock>Mi. 14. Apr.  17:26</Clock>
        </Status>
      </MenuBar>

      <Window>
        <TabBar>
          <Lights><Light $c="#fe5650" /><Light $c="#fdb42a" /><Light $c="#30c43f" /></Lights>
          {tabs.map((t) => (
            <Tab key={t.t} $active={t.active} $noLine={t.noLine}>
              <TabIcon>{t.icon}</TabIcon>
              <TabTitle $fade={t.fade} $ls={t.ls}>{t.t}</TabTitle>
              <Cross />
            </Tab>
          ))}
          <NewTab><Stroke s={15} w={1.7} d="M8 1v14M1 8h14" /></NewTab>
        </TabBar>
        <NavBar>
          <BackButton><Stroke w={2} d="M15 8H1.500M7.500 2L1.500 8l6 6" /></BackButton>
          <NavIcon $c="#77777a" $w={33}><Stroke w={1.6} d="M1 8h13.500M8.500 2l6 6-6 6" /></NavIcon>
          <NavIcon $w={32}><Stroke w={2} d="M13.500 10.500A6 6 0 1 1 12.500 4M14.500 1v5h-5" /></NavIcon>
          <NavIcon $w={32}><Stroke w={1.7} d="M1.500 8.500L8 1.500l6.500 7M3.500 8v6.500h9V8M6.500 14V9h3v5" /></NavIcon>
          <UrlBar>
            <NavIcon $w={16}><Stroke s={15} w={1.5}><path d={shieldPath} /><path d="M8 4v8q2.500-2 3-6z" fill="currentColor" strokeWidth=".5" /></Stroke></NavIcon>
            <UrlDivider />
            <NavIcon $w={14}><svg width="14" height="16" viewBox="0 0 14 16"><path d="M3.500 7V4.500a3.500 3.500 0 0 1 7 0V7" fill="none" stroke="#b8b8bb" strokeWidth="2" /><rect x="1.500" y="7" width="11" height="8" rx="1.500" fill="#b8b8bb" /><path d="M1 15L13 1" stroke="#ff0f39" strokeWidth="2" /></svg></NavIcon>
            <Url><b>192.168.178.50</b>:8089/index.php/backend</Url>
            <NavIcon $w={28} $c="#c6c6c9"><svg width="17" height="5" viewBox="0 0 17 5" fill="#c6c6c9"><circle cx="2.500" cy="2.500" r="2" /><circle cx="8.500" cy="2.500" r="2" /><circle cx="14.500" cy="2.500" r="2" /></svg></NavIcon>
            <NavIcon $w={28} $c="#c6c6c9"><Stroke w={1.6} d="M1 1.800h14v5.200a7 7 0 0 1-14 0zM4.700 6L8 9.200 11.300 6" /></NavIcon>
            <NavIcon $w={28} $c="#c6c6c9"><Stroke w={1.6} d="M8 1l2.100 4.500 4.900.6-3.600 3.400.9 4.900L8 12l-4.300 2.400.9-4.900L1 6.100l4.900-.6z" /></NavIcon>
          </UrlBar>
          <NavTools>
            <NavIcon $c="#45a1ff"><Stroke w={2} d="M8 .5v10M3.500 6.500L8 11l4.500-4.500M2 15h12" /></NavIcon>
            <NavIcon><Stroke w={1.7} d="M1.500 2v12.500M5.500 2v12.500M9 2v12.500M11.500 2.500l3.500 12" /></NavIcon>
            <NavIcon><Stroke w={1.6}><rect x=".8" y="2" width="14.400" height="12" rx="2" /><path d="M8 2v12M3 5h2.500M3 7.500h2.500M3 10h2" strokeWidth="1.200" /></Stroke></NavIcon>
            <NavIcon><svg width="18" height="20" viewBox="0 0 18 20"><circle cx="8" cy="11" r="7" fill="none" stroke="#c6c6c9" strokeWidth="1.300" /><circle cx="8" cy="9" r="3" fill="#c6c6c9" /><path d="M3.500 14.500q4.500-3.500 9 0-4.500 4-9 0z" fill="#c6c6c9" /><circle cx="15" cy="3" r="3" fill="#00b3f4" /></svg></NavIcon>
            <NavIcon><svg width="16" height="16" viewBox="0 0 16 16"><path d={shieldPath} fill="#000" stroke="#000" /><path d="M5 8l2.300 2.300L11 6" fill="none" stroke="#3c3c3e" strokeWidth="1.300" /></svg></NavIcon>
            <NavIcon><svg width="16" height="16" viewBox="0 0 16 16"><path d="M5 0h6l5 5v6l-5 5H5l-5-5V5z" fill="#c70d10" /><text x="8" y="10.500" fontFamily="Inter, sans-serif" fontSize="7" fontWeight="700" textAnchor="middle" fill="#fff">ABP</text></svg></NavIcon>
            <NavIcon $c="#7e7e81"><svg width="16" height="14" viewBox="0 0 16 14"><path d="M6 10.500H1.500v-9h12V6" fill="none" stroke="#7e7e81" strokeWidth="1.500" /><path d="M1.500 2h12" stroke="#7e7e81" strokeWidth="2" /><rect x="7.500" y="6" width="8" height="8" fill="#8a8a8d" /><path d="M9.500 8l4 4M13.500 8l-4 4" stroke="#323234" strokeWidth="1.300" /></svg></NavIcon>
            <NavIcon><svg width="16" height="16" viewBox="0 0 16 16"><circle cx="8" cy="8" r="7.200" fill="#fff" stroke="#3d86d8" strokeWidth="1.500" /><circle cx="8" cy="8" r="4.600" fill="#f3e6e6" stroke="#3c3f48" strokeWidth="1.200" /><path d="M4.800 4.800l6.400 6.400" stroke="#c3262c" strokeWidth="2" /></svg></NavIcon>
            <NavIcon><svg width="16" height="15" viewBox="0 0 17 15" fill="none" stroke="#f0f0f1" strokeWidth="1.800"><path d="M4 0v8h4M7 1h8M11 1v8M9 9h4" /><path d="M1 13q2-2.500 4 0t4 0 4 0 3.500-1" /></svg></NavIcon>
            <MenuDivider />
            <NavIcon $w={16}><Stroke w={1.8} d="M2 3h12M2 8h12M2 13h12" /></NavIcon>
          </NavTools>
        </NavBar>
        <BookmarkBar>
          {bookmarks.map(([t, w, icon]) => <Bookmark key={t} $w={w}>{icon}{t}</Bookmark>)}
          <OtherBookmarks $w={129}><Folder />Weitere Lesezeichen</OtherBookmarks>
        </BookmarkBar>

        <AppHeader>
          <Brand><AppLogo /><span>Christian Knedel</span></Brand>
          {navItems.map((n, i) => <NavLink key={n} $active={i === 0}>{n}</NavLink>)}
        </AppHeader>
        <Page>
          <CalendarToolbar>
            <ToolbarLabel>Display Calendar</ToolbarLabel>
            <Select>John Doe<FaCaretDown size={13} /></Select>
            <ToolbarActions>
              <ActionButton $w={124}><Plus />Appointment</ActionButton>
              <ActionButton $w={117}><Plus />Unavailable</ActionButton>
              <ActionButton $w={89}><Stroke s={13} w={2} d="M13.800 10A6.300 6.300 0 1 1 12.800 4M14.500 1v5h-5" />Reload</ActionButton>
              <ActionButton $w={45}><svg width="14" height="14" viewBox="0 0 14 14" fill="#333"><path d="M.3.300h4.200L3.200 1.600 5.600 4 4 5.600 1.600 3.200.3 4.500zM13.700.3v4.200L12.400 3.200 10 5.600 8.400 4l2.400-2.400L9.500.3zM.3 13.700V9.500l1.300 1.300L4 8.400 5.600 10l-2.400 2.400 1.300 1.300zM13.700 13.700H9.500l1.300-1.300L8.400 10 10 8.400l2.400 2.400 1.300-1.300z" /></svg></ActionButton>
            </ToolbarActions>
          </CalendarToolbar>
          <CalendarHeader>
            <ButtonSet>
              <FcButton $w={39} $gap={0.01} $r="4px 0 0 4px"><Stroke s={14} w={3} d="M9.500 3L4.500 8l5 5" /></FcButton>
              <FcButton $w={38} $r="0 4px 4px 0"><Stroke s={14} w={3} d="M6 3l5 5-5 5" /></FcButton>
              <FcButton $w={53} $gap={10} $r="4px">Today</FcButton>
            </ButtonSet>
            <MonthTitle>April 2021</MonthTitle>
            <ButtonSet $right>
              <FcButton $w={40} $r="4px 0 0 4px">Day</FcButton>
              <FcButton $w={50} $active>Week</FcButton>
              <FcButton $w={55} $r="0 4px 4px 0">Month</FcButton>
            </ButtonSet>
          </CalendarHeader>
          <Grid>
            <HeadRow $h={25}><HeadCell />{days.map((d) => <HeadCell key={d}>{d}</HeadCell>)}</HeadRow>
            <HeadRow $h={40}><HeadCell $plain>All Day</HeadCell>{days.map((d) => <HeadCell key={d} />)}</HeadRow>
            <Band />
            <TimeBody>
              <Layer>
                {hours.map((h) => <Hour key={h}><HourLabel>{h}</HourLabel><HalfHour /></Hour>)}
              </Layer>
              <DayLayer><span />{days.map((d, i) => <DaySlots key={d} index={i} />)}</DayLayer>
            </TimeBody>
          </Grid>
        </Page>
        <Footer>
          <span>Powered by <a>Easy!Appointments v1.3.0</a> | Licensed Under GPLv3 | <Language>English</Language> | <a>Go To Booking Page</a></span>
          <b>Hello, Christian KNedel!</b>
        </Footer>
      </Window>

      <Popover>
        <PopoverTitle>Top Beratung - chris Knedel</PopoverTitle>
        <PopoverRows>{details.map(([k, v]) => <div key={v}>{k && <b>{k}</b>}{v}</div>)}</PopoverRows>
        <PopoverFooter>
          <PopoverButton $w={38} $bg="#428bca">Edit</PopoverButton>
          <PopoverButton $w={53} $bg="#dc3a40">Delete</PopoverButton>
          <PopoverButton $w={49} $bg="#fff" $c="#333">Close</PopoverButton>
        </PopoverFooter>
      </Popover>

      <DockArea>
        <Dock>
          <DockCell $running><Finder /></DockCell>
          <DockCell><Launchpad /></DockCell>
          <DockCell $running><VsCode /></DockCell>
          <DockCell><VmWare /></DockCell>
          <DockCell><PyCharm /></DockCell>
          <DockCell $running><Docker /></DockCell>
          <DockCell><Arduino /></DockCell>
          <DockCell><Remote /></DockCell>
          <DockCell $running><Terminal /></DockCell>
          <DockCell><Calibre /></DockCell>
          <DockCell><Chrome /></DockCell>
          <DockCell $running><Firefox /></DockCell>
          <DockCell><Safari /></DockCell>
          <DockCell $running><Mail /><CountBadge $right={0}>130</CountBadge></DockCell>
          <DockCell><Office letter="W" main="#1b50b3" a="#41a5ee" b="#2b7cd3" c="#1d55bd" d="#153e90" /></DockCell>
          <DockCell><Office letter="X" main="#127a3d" a="#2cae68" b="#21915a" c="#146f3c" d="#164f2e" /></DockCell>
          <DockCell><Office letter="P" main="#bb3417" a="#f08a6b" b="#e8603f" c="#c84a2a" round /></DockCell>
          <DockCell><Photos /></DockCell>
          <DockCell><CalendarIcon /></DockCell>
          <DockCell><Music /></DockCell>
          <DockCell><Notes /></DockCell>
          <DockCell><Settings /><CountBadge $right={1}>1</CountBadge></DockCell>
          <DockCell><PreviewIcon /></DockCell>
          <DockDivider $w={22} />
          <DockCell><Docker /></DockCell>
          <DockCell><Docker /></DockCell>
          <DockCell><KeePass /></DockCell>
          <DockDivider $w={21} />
          <DockCell><PictureStack /></DockCell>
          <DockCell><MiniWindow /></DockCell>
          <DockCell><Trash /></DockCell>
        </Dock>
      </DockArea>
    </Desktop>
  );
}
